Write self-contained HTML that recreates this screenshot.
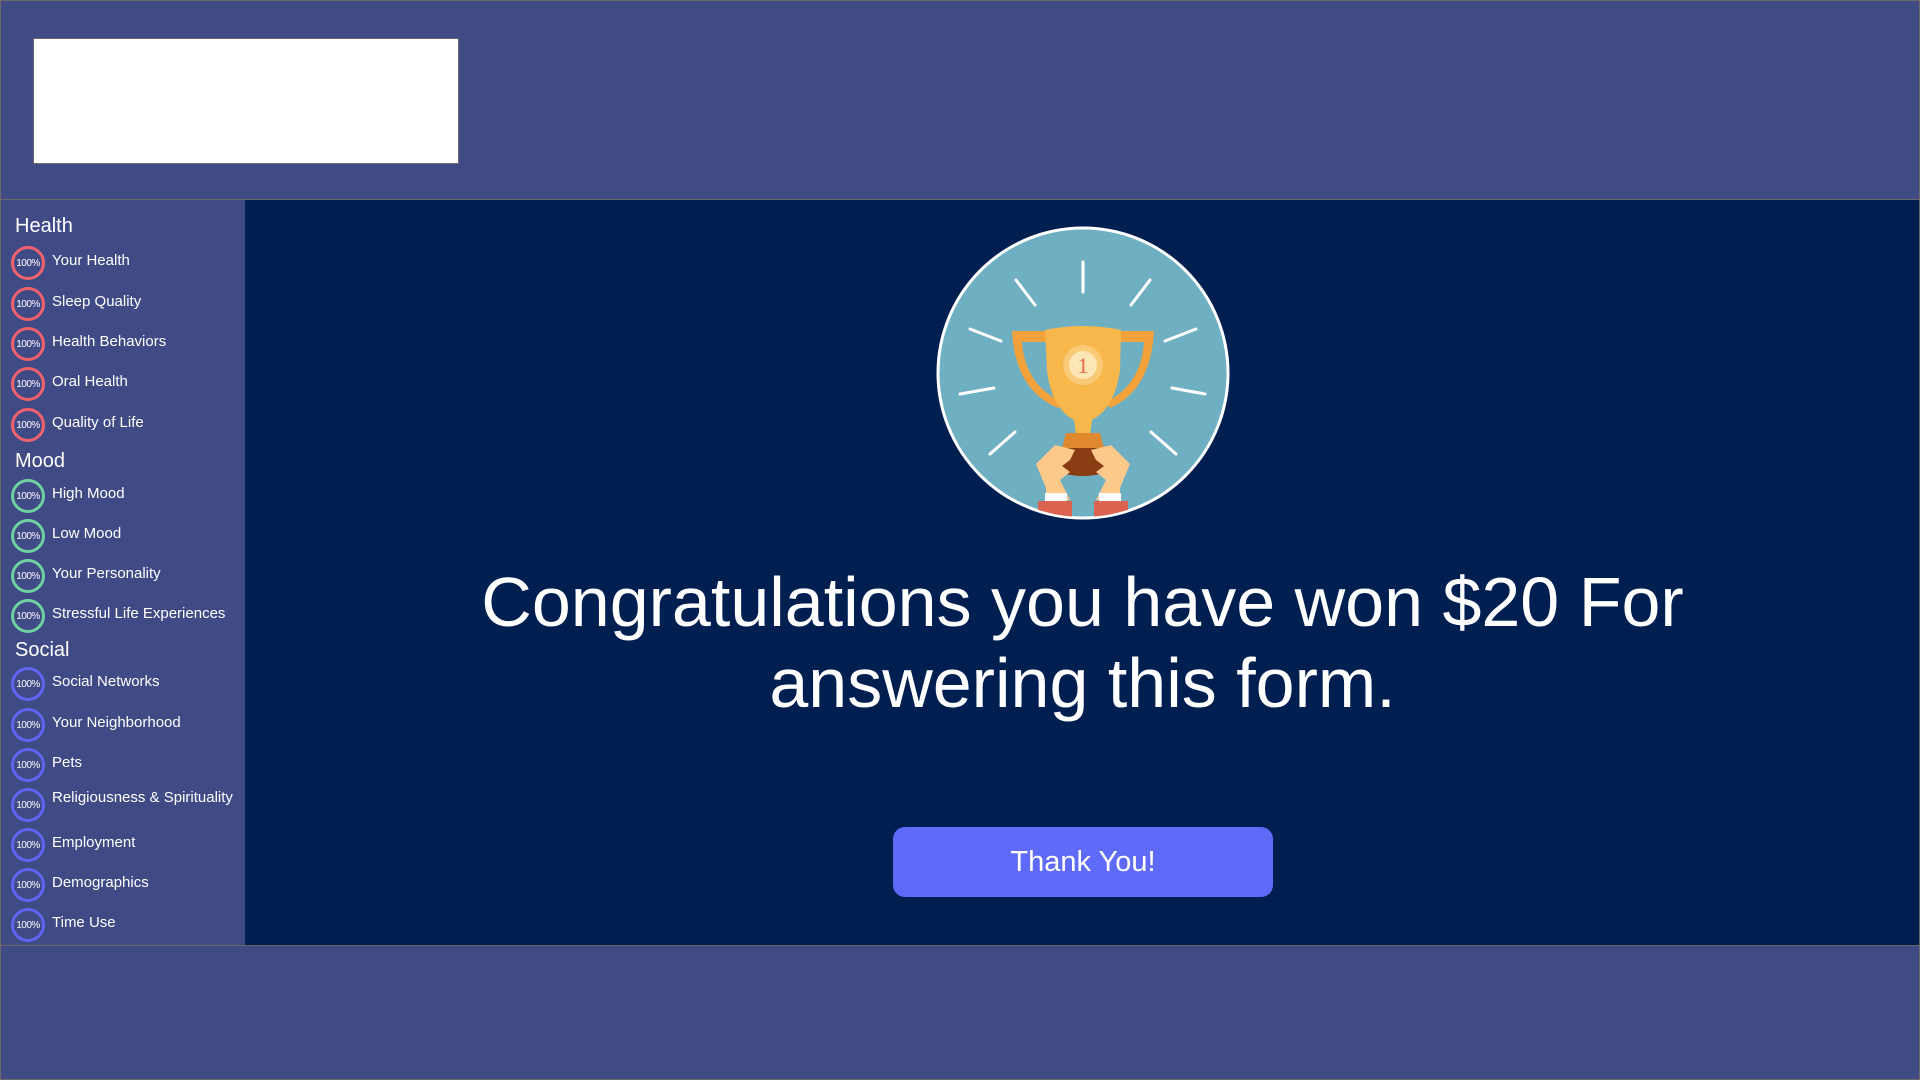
<!DOCTYPE html>
<html><head><meta charset="utf-8"><style>
*{margin:0;padding:0;box-sizing:border-box}
body{width:1920px;height:1080px;background:#404a85;font-family:"Liberation Sans",Arial,sans-serif;position:relative;overflow:hidden;color:#fff}
.frame{position:absolute;left:0;top:0;width:1920px;height:1080px;border:1px solid #6a6a6a}
.header{position:absolute;left:0;top:0;width:1920px;height:200px;border:1px solid #6a6a6a;background:#404a85}
.logo{position:absolute;left:32px;top:37px;width:426px;height:126px;background:#fff;border:1px solid #6a6a6a}
.side{position:absolute;left:0;top:199px;width:246px;height:747px;background:#404a85;border:1px solid #6a6a6a}
.main{position:absolute;left:245px;top:200px;width:1675px;height:745px;background:#001f51}
.footer{position:absolute;left:0;top:945px;width:1920px;height:135px;border-top:1px solid #6a6a6a;background:#404a85}
.h{position:absolute;left:14px;font-size:20px}
.it{position:absolute;left:10px;height:34px;display:flex;align-items:center}
.c{width:34px;height:34px;border-radius:50%;border:3px solid;font-size:10px;display:flex;align-items:center;justify-content:center;letter-spacing:-0.5px;margin-right:7px}
.r{border-color:#f0626b}.g{border-color:#6fd0a0}.b{border-color:#6064f0}
.t{font-size:15px;margin-top:-6px}
.msg{position:absolute;left:245px;width:1675px;top:562px;text-align:center;font-size:70px;line-height:81px;white-space:nowrap}
.btn{position:absolute;left:893px;top:827px;width:380px;height:70px;background:#5f6bf8;border-radius:12px;font-size:29px;display:flex;align-items:center;justify-content:center}
</style></head><body>
<div class="header"><div class="logo"></div></div>
<div class="side">
<div class="h" style="top:15px">Health</div>
<div class="it" style="top:46px"><div class="c r">100%</div><span class="t">Your Health</span></div>
<div class="it" style="top:87px"><div class="c r">100%</div><span class="t">Sleep Quality</span></div>
<div class="it" style="top:127px"><div class="c r">100%</div><span class="t">Health Behaviors</span></div>
<div class="it" style="top:167px"><div class="c r">100%</div><span class="t">Oral Health</span></div>
<div class="it" style="top:208px"><div class="c r">100%</div><span class="t">Quality of Life</span></div>
<div class="h" style="top:250px">Mood</div>
<div class="it" style="top:279px"><div class="c g">100%</div><span class="t">High Mood</span></div>
<div class="it" style="top:319px"><div class="c g">100%</div><span class="t">Low Mood</span></div>
<div class="it" style="top:359px"><div class="c g">100%</div><span class="t">Your Personality</span></div>
<div class="it" style="top:399px"><div class="c g">100%</div><span class="t">Stressful Life Experiences</span></div>
<div class="h" style="top:439px">Social</div>
<div class="it" style="top:467px"><div class="c b">100%</div><span class="t">Social Networks</span></div>
<div class="it" style="top:508px"><div class="c b">100%</div><span class="t">Your Neighborhood</span></div>
<div class="it" style="top:548px"><div class="c b">100%</div><span class="t">Pets</span></div>
<div class="it" style="top:588px"><div class="c b">100%</div><span class="t" style="margin-top:-16px">Religiousness &amp; Spirituality</span></div>
<div class="it" style="top:628px"><div class="c b">100%</div><span class="t">Employment</span></div>
<div class="it" style="top:668px"><div class="c b">100%</div><span class="t">Demographics</span></div>
<div class="it" style="top:708px"><div class="c b">100%</div><span class="t">Time Use</span></div>
</div>
<div class="main"></div>
<svg style="position:absolute;left:920px;top:210px" width="320" height="320" viewBox="0 0 320 320">
<defs><clipPath id="cp"><circle cx="163" cy="163" r="144"/></clipPath></defs>
<circle cx="163" cy="163" r="145" fill="#6eafc2" stroke="#fff" stroke-width="3"/>
<g stroke="#fff" stroke-width="3" stroke-linecap="round">
<line x1="163" y1="52" x2="163" y2="82"/>
<line x1="96" y1="70" x2="115" y2="95"/>
<line x1="230" y1="70" x2="211" y2="95"/>
<line x1="50" y1="119" x2="81" y2="131"/>
<line x1="276" y1="119" x2="245" y2="131"/>
<line x1="40" y1="184" x2="74" y2="178"/>
<line x1="285" y1="184" x2="252" y2="178"/>
<line x1="70" y1="244" x2="95" y2="222"/>
<line x1="256" y1="244" x2="231" y2="222"/>
</g>
<g clip-path="url(#cp)">
<path d="M92 121 L128 121 L158 160 L150 165 L127 132 L102 132 Q105 175 142 192 L138 198 Q95 180 92 121Z" fill="#f3a13a"/>
<path d="M234 121 L198 121 L170 160 L178 165 L201 132 L224 132 Q221 175 186 192 L190 198 Q231 180 234 121Z" fill="#f3a13a"/>
<path d="M125 120 Q163 112 201 120 L200 160 Q195 198 172 210 L170 225 L156 225 L154 210 Q131 198 127 160Z" fill="#f7b74a"/>
<circle cx="163" cy="155" r="20" fill="#fbd08a" opacity=".7"/>
<circle cx="163" cy="155" r="14" fill="#fde6b5"/>
<text x="163" y="163" font-family="Liberation Serif,serif" font-size="22" fill="#e8674a" text-anchor="middle">1</text>
<path d="M146 223 L180 223 L184 238 L142 238Z" fill="#e0882e"/>
<path d="M142 238 L184 238 L188 262 Q163 270 138 262Z" fill="#8a3c12"/>
<path d="M126 290 L126 278 L116 254 L135 235 L155 240 L150 250 L142 256 L150 262 L140 270 L150 290Z" fill="#fcc98a"/>
<path d="M200 290 L200 278 L210 254 L191 235 L171 240 L176 250 L184 256 L176 262 L186 270 L176 290Z" fill="#fcc98a"/>
<rect x="125" y="283" width="22" height="8" fill="#fff"/>
<rect x="179" y="283" width="22" height="8" fill="#fff"/>
<rect x="118" y="291" width="34" height="20" fill="#dc6350"/>
<rect x="174" y="291" width="34" height="20" fill="#dc6350"/>
</g>
</svg>
<div class="msg">Congratulations you have won $20 For<br>answering this form.</div>
<div class="btn">Thank You!</div>
<div class="footer"></div>
<div class="frame"></div>
</body></html>
